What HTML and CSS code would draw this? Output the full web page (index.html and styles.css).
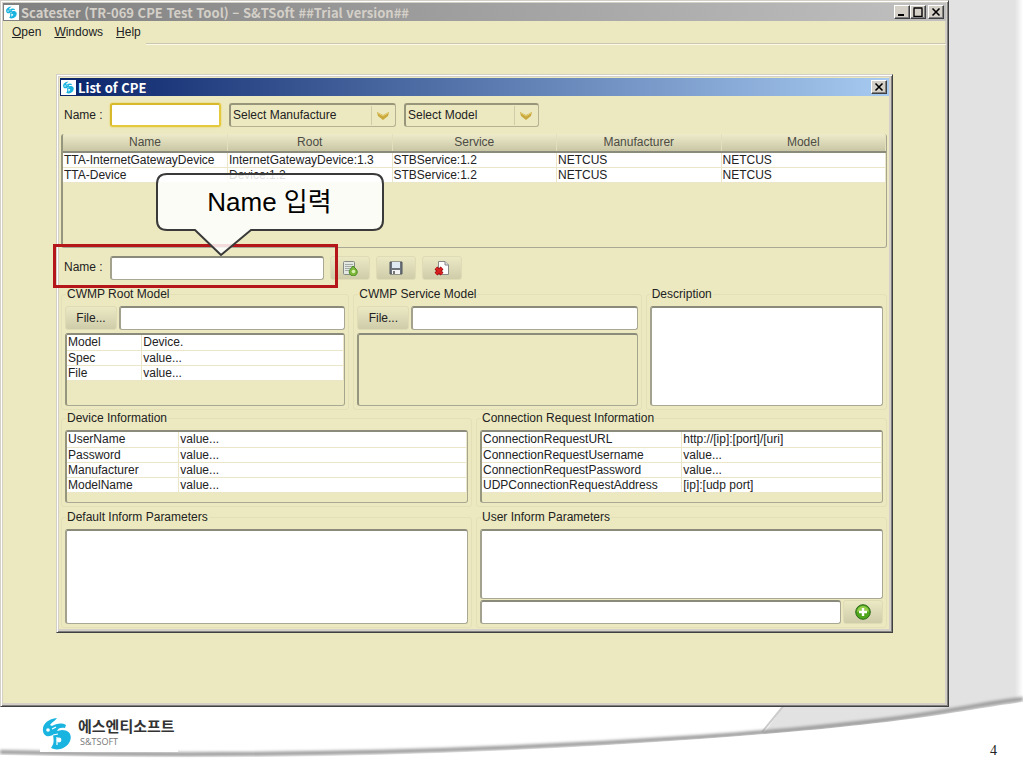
FILE: index.html
```html
<!DOCTYPE html>
<html lang="ko">
<head>
    <meta charset="UTF-8">
    <meta name="viewport" content="width=device-width, initial-scale=1.0">
    <title>Scatester - List of CPE</title>
    <link rel="stylesheet" href="styles.css">
</head>
<body>
    <svg class="backdrop" viewBox="0 0 1023 767" preserveAspectRatio="none" aria-hidden="true">
        <defs>
            <linearGradient id="edge" x1="0" x2="1" y1="0" y2="0">
                <stop offset="0" stop-color="#e2e2e2"/>
                <stop offset="1" stop-color="#ffffff"/>
            </linearGradient>
            <filter id="soft" x="-5%" y="-50%" width="110%" height="200%">
                <feGaussianBlur stdDeviation="1.5"/>
            </filter>
        </defs>
        <path d="M785 704 H900 V0 H1017 V712 L762 736 Z" fill="#e2e2e2"/>
        <rect x="1015" y="0" width="8" height="704" fill="url(#edge)"/>
        <path d="M785 704 L762 732" stroke="#cccccc" stroke-width="2"/>
        <path d="M0 752 C260 758 480 752 700 737 S960 706 1023 699" fill="none" stroke="#9a9a9a" stroke-width="4" filter="url(#soft)"/>
        <path d="M0 755 C260 761 480 755 700 739 S960 710 1023 702 V767 H0 Z" fill="#ffffff"/>
    </svg>

    <svg class="sprites" aria-hidden="true">
        <symbol id="logo" viewBox="0 0 30 34">
            <path d="M15 1 C6 2 0 7 1 14 C2 20 7 20 11 18 C12 24 12 27 9 31 C15 34 23 32 27 26 C31 19 28 13 20 13 L15 14 C16 11 19 10 23 11 L24 8 C19 5 14 7 10 9 L8 8 C10 5 13 4 15 1 Z"/>
            <circle cx="6" cy="13" r="1.8" fill="#fff"/>
            <circle cx="17" cy="23" r="2.4" fill="#fff"/>
            <path d="M10 12 L14 10 M11 18 L16 17 M15 20 L15 28" stroke="#fff" stroke-width="1.2"/>
        </symbol>
        <symbol id="close" viewBox="0 0 10 10">
            <path d="M1.5 1.5 L8.5 8.5 M8.5 1.5 L1.5 8.5" stroke="#000" stroke-width="1.6"/>
        </symbol>
        <symbol id="chevron" viewBox="0 0 14 10">
            <path d="M1 1 L7 4 L13 1 L12 5 L7 9 L2 5 Z" fill="#c9a83c"/>
            <path d="M2 2 L7 5 L12 2" fill="none" stroke="#e6d07a"/>
        </symbol>
    </svg>

    <main class="window app">
        <header class="titlebar titlebar-inactive">
            <svg class="title-icon"><use href="#logo"/></svg>
            <h1>Scatester (TR-069 CPE Test Tool) – S&amp;TSoft ##Trial version##</h1>
            <button class="win-btn" aria-label="Minimize"><svg viewBox="0 0 10 10"><path d="M1 8 H7" stroke="#000" stroke-width="2"/></svg></button>
            <button class="win-btn" aria-label="Maximize"><svg viewBox="0 0 10 10"><path d="M1 1.5 V9.5 H9 V1.5 M0.5 1 H9.5" fill="none" stroke="#000" stroke-width="1.4"/></svg></button>
            <button class="win-btn win-close" aria-label="Close"><svg><use href="#close"/></svg></button>
        </header>

        <div class="menubar">
            <nav>
                <a href="#open"><u>O</u>pen</a>
                <a href="#windows"><u>W</u>indows</a>
                <a href="#help"><u>H</u>elp</a>
            </nav>
        </div>

        <div class="desktop">
            <section class="window dialog">
                <header class="titlebar">
                    <svg class="title-icon"><use href="#logo"/></svg>
                    <h2>List of CPE</h2>
                    <button class="win-btn" aria-label="Close"><svg><use href="#close"/></svg></button>
                </header>

                <form class="content">
                    <div class="filters">
                        <label for="filter-name">Name :</label>
                        <input type="text" id="filter-name" class="field focused">
                        <div class="combo combo-wide">
                            <select aria-label="Manufacture"><option>Select Manufacture</option></select>
                            <svg><use href="#chevron"/></svg>
                        </div>
                        <div class="combo">
                            <select aria-label="Model"><option>Select Model</option></select>
                            <svg><use href="#chevron"/></svg>
                        </div>
                    </div>

                    <div class="pane cpe-list">
                        <table>
                            <thead>
                                <tr><th>Name</th><th>Root</th><th>Service</th><th>Manufacturer</th><th>Model</th></tr>
                            </thead>
                            <tbody>
                                <tr><td>TTA-InternetGatewayDevice</td><td>InternetGatewayDevice:1.3</td><td>STBService:1.2</td><td>NETCUS</td><td>NETCUS</td></tr>
                                <tr><td>TTA-Device</td><td>Device:1.2</td><td>STBService:1.2</td><td>NETCUS</td><td>NETCUS</td></tr>
                            </tbody>
                        </table>
                    </div>

                    <div class="name-row">
                        <label for="cpe-name">Name :</label>
                        <input type="text" id="cpe-name" class="field">
                        <button type="button" class="btn" aria-label="New">
                            <svg viewBox="0 0 16 16">
                                <rect x="1.5" y="1.5" width="11" height="13" rx="1" fill="#e4e8e2" stroke="#858a85"/>
                                <path d="M3 4.5 H11 M3 6.5 H11 M3 8.5 H9 M3 10.5 H8" stroke="#a3aaa6"/>
                                <path d="M11 6 L14 9 A4 4 0 1 1 8.5 9 Z" fill="#7db83c" stroke="#4b8c22"/>
                                <circle cx="11.5" cy="11.5" r="1.8" fill="#d8f0b0"/>
                            </svg>
                        </button>
                        <button type="button" class="btn" aria-label="Save">
                            <svg viewBox="0 0 16 16">
                                <path d="M2 2 H14 V14 H2 Z" fill="#6d747c" stroke="#50565d"/>
                                <rect x="4" y="2" width="8" height="6" fill="#dfe9f2"/>
                                <rect x="4" y="10" width="8" height="4" fill="#f5f5f5"/>
                                <rect x="5" y="11" width="2" height="3" fill="#777"/>
                            </svg>
                        </button>
                        <button type="button" class="btn" aria-label="Delete">
                            <svg viewBox="0 0 16 16">
                                <path d="M4.5 1.5 H11 L14.5 5 V14.5 H4.5 Z" fill="#fff" stroke="#888"/>
                                <path d="M11 1.5 V5 H14.5" fill="#ddd" stroke="#888"/>
                                <path d="M2 8 L8 14 M8 8 L2 14" stroke="#8e0d0d" stroke-width="4"/>
                                <path d="M2 8 L8 14 M8 8 L2 14" stroke="#d92020" stroke-width="2.5"/>
                            </svg>
                        </button>

                        <div class="highlight"></div>
                        <div class="callout">
                            <svg viewBox="0 0 229 86" aria-hidden="true">
                                <path d="M12 2 H218 Q228 2 228 12 V48 Q228 58 218 58 H96 L66 83 L40 58 H12 Q2 58 2 48 V12 Q2 2 12 2 Z" fill="#ffffff" fill-opacity=".85" stroke="#3a3a3a" stroke-width="2"/>
                            </svg>
                            <p>Name 입력</p>
                        </div>
                    </div>

                    <div class="models">
                        <fieldset>
                            <legend>CWMP Root Model</legend>
                            <div class="file-row">
                                <button type="button" class="btn">File...</button>
                                <input type="text" class="field" aria-label="Root model file">
                            </div>
                            <div class="pane">
                                <table class="props props-model">
                                    <tr><td>Model</td><td>Device.</td></tr>
                                    <tr><td>Spec</td><td>value...</td></tr>
                                    <tr><td>File</td><td>value...</td></tr>
                                </table>
                            </div>
                        </fieldset>
                        <fieldset>
                            <legend>CWMP Service Model</legend>
                            <div class="file-row">
                                <button type="button" class="btn">File...</button>
                                <input type="text" class="field" aria-label="Service model file">
                            </div>
                            <div class="pane"></div>
                        </fieldset>
                        <fieldset>
                            <legend>Description</legend>
                            <textarea class="field description" aria-label="Description"></textarea>
                        </fieldset>
                    </div>

                    <div class="details">
                        <fieldset>
                            <legend>Device Information</legend>
                            <div class="pane">
                                <table class="props props-device">
                                    <tr><td>UserName</td><td>value...</td></tr>
                                    <tr><td>Password</td><td>value...</td></tr>
                                    <tr><td>Manufacturer</td><td>value...</td></tr>
                                    <tr><td>ModelName</td><td>value...</td></tr>
                                </table>
                            </div>
                        </fieldset>
                        <fieldset>
                            <legend>Connection Request Information</legend>
                            <div class="pane">
                                <table class="props props-connection">
                                    <tr><td>ConnectionRequestURL</td><td>http://[ip]:[port]/[uri]</td></tr>
                                    <tr><td>ConnectionRequestUsername</td><td>value...</td></tr>
                                    <tr><td>ConnectionRequestPassword</td><td>value...</td></tr>
                                    <tr><td>UDPConnectionRequestAddress</td><td>[ip]:[udp port]</td></tr>
                                </table>
                            </div>
                        </fieldset>
                        <fieldset>
                            <legend>Default Inform Parameters</legend>
                            <textarea class="field default-params" aria-label="Default Inform Parameters"></textarea>
                        </fieldset>
                        <fieldset>
                            <legend>User Inform Parameters</legend>
                            <textarea class="field user-params" aria-label="User Inform Parameters"></textarea>
                            <div class="add-row">
                                <input type="text" class="field" aria-label="New parameter">
                                <button type="button" class="btn" aria-label="Add">
                                    <svg viewBox="0 0 16 16">
                                        <circle cx="8" cy="8" r="7.3" fill="#4fa51c" stroke="#2d6b1c"/>
                                        <path d="M2 8 A6 6 0 0 1 14 8 Q8 5 2 8 Z" fill="#97cf4c"/>
                                        <path d="M8 4 V12 M4 8 H12" stroke="#fff" stroke-width="2.4"/>
                                    </svg>
                                </button>
                            </div>
                        </fieldset>
                    </div>
                </form>
            </section>
        </div>
    </main>

    <footer class="slide-footer">
        <div class="brand">
            <svg><use href="#logo"/></svg>
            <div>
                <strong>에스엔티소프트</strong>
                <small>S&amp;TSOFT</small>
            </div>
        </div>
        <span class="page-number">4</span>
    </footer>
</body>
</html>
```
FILE: styles.css
```css
* {
    box-sizing: border-box;
}

body {
    margin: 0;
    position: relative;
    min-height: 100vh;
    background: #fff;
    color: #222;
    font-family: "Liberation Sans", "Noto Sans CJK KR", sans-serif;
    font-size: 12px;
    line-height: 15px;
}

.backdrop {
    position: absolute;
    inset: 0;
    width: 100%;
    height: 100%;
    z-index: -1;
}

.sprites {
    display: none;
}

button, input, select, textarea {
    margin: 0;
    font: inherit;
    color: inherit;
}

/* window frames */
.window {
    background: #ece9c0;
    border: 1px solid;
    border-color: #d4d0c8 #404040 #404040 #d4d0c8;
    box-shadow: inset 1px 1px #fff, inset -1px -1px #808080, inset 2px 2px #d4d0c8, inset -3px -3px #d4d0c8;
}

.app {
    width: calc(100% - 74px);
    padding: 2px;
}

.dialog {
    padding: 3px;
}

.titlebar {
    display: flex;
    align-items: center;
    height: 18px;
    padding: 0 2px 0 1px;
    background: linear-gradient(to right, #0a246a, #a6caf0);
    color: #fff;
}

.titlebar-inactive {
    background: linear-gradient(to right, #808080, #c0c0c0);
    color: #d4d0c8;
}

.titlebar h1, .titlebar h2 {
    flex: 1;
    margin: 0 0 0 2px;
    font-family: "Noto Sans CJK KR", sans-serif;
    font-size: 13px;
    font-weight: bold;
}

.title-icon {
    width: 15px;
    height: 15px;
    padding: 1px;
    background: #fff;
    fill: #19b4e0;
}

.win-btn {
    display: flex;
    align-items: center;
    justify-content: center;
    width: 16px;
    height: 14px;
    padding: 0;
    background: #d4d0c8;
    border: 1px solid;
    border-color: #fff #404040 #404040 #fff;
    box-shadow: inset -1px -1px #808080;
}

.win-btn svg {
    width: 10px;
    height: 10px;
}

.win-close {
    margin-left: 2px;
}

/* menu */
.menubar {
    display: flex;
    height: 23px;
}

.menubar::after {
    content: "";
    flex: 1;
    border-bottom: 1px solid #c9c7ae;
    box-shadow: 0 1px #fbfae8;
}

.menubar nav {
    display: flex;
    gap: 13px;
    width: 143px;
    padding: 4px 9px;
}

.menubar a {
    color: inherit;
    text-decoration: none;
}

.desktop {
    padding: 30px 53px 71px;
}

.content {
    padding: 0 2px 1px 1px;
}

/* controls */
.field {
    min-width: 0;
    height: 24px;
    padding: 2px 4px;
    background: #fff;
    border: solid;
    border-width: 2px 1px 1px 2px;
    border-color: #8b8b7c #a9a894 #a9a894 #a3a28e;
    border-radius: 3px;
    outline: none;
}

.focused {
    border-width: 2px;
    border-color: #d9b92c #e5c93c #e5c93c #d9b92c;
    box-shadow: 0 0 2px #e8cb40;
}

textarea.field {
    display: block;
    width: 100%;
    resize: none;
}

.btn {
    display: flex;
    align-items: center;
    justify-content: center;
    width: 40px;
    height: 24px;
    padding: 0;
    background: linear-gradient(#ebe8c4, #cfccaa);
    border: 1px solid #dedbb5;
    border-radius: 3px;
}

.btn svg {
    width: 16px;
    height: 16px;
}

.combo {
    display: grid;
    grid-template-columns: 1fr 24px;
    align-items: center;
    justify-items: center;
    width: 135px;
    height: 24px;
    border: solid;
    border-width: 2px 1px 1px 2px;
    border-color: #98967a #b5b294 #b5b294 #98967a;
    border-radius: 3px;
}

.combo-wide {
    width: 167px;
}

.combo select {
    grid-area: 1 / 1 / 2 / 3;
    width: 100%;
    height: 20px;
    padding: 0 2px;
    appearance: none;
    background: transparent;
    border: 0;
}

.combo svg {
    grid-area: 1 / 2;
    width: 14px;
    height: 10px;
    pointer-events: none;
}

.combo::after {
    content: "";
    grid-area: 1 / 2;
    justify-self: start;
    width: 1px;
    height: 19px;
    background: #cfccaa;
}

.filters {
    display: flex;
    align-items: center;
    gap: 8px;
    height: 38px;
    padding: 0 3px;
}

.filters label, .name-row label {
    flex: none;
    width: 38px;
    white-space: nowrap;
}

.filters .field {
    width: 111px;
}

/* tables */
.pane {
    height: 73px;
    border: solid;
    border-width: 2px 1px 1px 2px;
    border-color: #8b8b7c #a5a48c #a9a894 #96967f;
    border-radius: 3px;
    overflow: hidden;
}

table {
    width: 100%;
    table-layout: fixed;
    border-collapse: collapse;
}

td {
    height: 15px;
    padding: 0 1px;
    background: #fff;
    border-right: 1px solid #ebe6c8;
    border-bottom: 1px solid #ebe6c8;
    line-height: 14px;
    white-space: nowrap;
}

th {
    height: 18px;
    padding: 0;
    background: linear-gradient(#eeebca, #c9c6a6);
    border-right: 1px solid #e2dfbd;
    border-bottom: 2px solid #8b8b7c;
    color: #4c4c44;
    font-weight: normal;
    line-height: 15px;
}

.cpe-list {
    height: 114px;
    border-top: 0;
}

.props-model td:first-child {
    width: 27%;
}

.props-device td:first-child {
    width: 28%;
}

.props-connection td:first-child {
    width: 50%;
}

/* name row with its annotation */
.name-row {
    position: relative;
    display: flex;
    align-items: center;
    gap: 6px;
    height: 39px;
    padding: 0 3px;
}

.name-row label {
    width: 40px;
}

.name-row .field {
    width: 214px;
}

.highlight {
    position: absolute;
    left: -8px;
    top: -4px;
    width: 285px;
    height: 44px;
    border: 3px solid #b5161a;
}

.callout {
    position: absolute;
    left: 94px;
    top: -76px;
    width: 229px;
    height: 86px;
}

.callout svg {
    display: block;
}

.callout p {
    position: absolute;
    inset: 0 0 auto;
    margin: 0;
    color: #000;
    font-size: 26px;
    line-height: 60px;
    text-align: center;
}

/* groups */
fieldset {
    min-width: 0;
    margin: 0;
    padding: 4px 3px 3px;
    border: 1px solid #e3e0b8;
    border-radius: 3px;
}

legend {
    margin-left: 1px;
    padding: 0 1px;
}

.models {
    display: grid;
    grid-template-columns: 288fr 288fr 241fr;
    gap: 4px;
    margin-bottom: 1px;
}

.details {
    display: grid;
    grid-template-columns: 1fr 1fr;
    gap: 3px 4px;
}

.file-row {
    display: flex;
    gap: 2px;
    margin-bottom: 3px;
}

.file-row .btn {
    width: 52px;
}

.file-row .field, .add-row .field {
    flex: 1;
}

.description {
    height: 100px;
}

textarea.default-params {
    height: 95px;
}

textarea.user-params {
    height: 70px;
}

.add-row {
    display: flex;
    gap: 2px;
    margin-top: 1px;
}

/* slide footer */
.slide-footer {
    display: flex;
    align-items: flex-start;
    justify-content: space-between;
    padding: 4px 26px 0 40px;
}

.brand {
    display: flex;
    gap: 6px;
    width: 138px;
    height: 41px;
    padding: 6px 2px 0;
    background: #fff;
}

.brand svg {
    width: 30px;
    height: 34px;
    fill: #19b4e0;
}

.brand strong, .brand small {
    display: block;
    white-space: nowrap;
}

.brand strong {
    color: #333;
    font-family: "Noto Sans CJK KR", sans-serif;
    font-size: 15px;
    line-height: 18px;
}

.brand small {
    padding-left: 2px;
    color: #777;
    font-family: "Open Sans", sans-serif;
    font-size: 9px;
    line-height: 14px;
}

.page-number {
    padding-top: 32px;
    font-family: "Liberation Serif", serif;
    font-size: 14px;
}
```
